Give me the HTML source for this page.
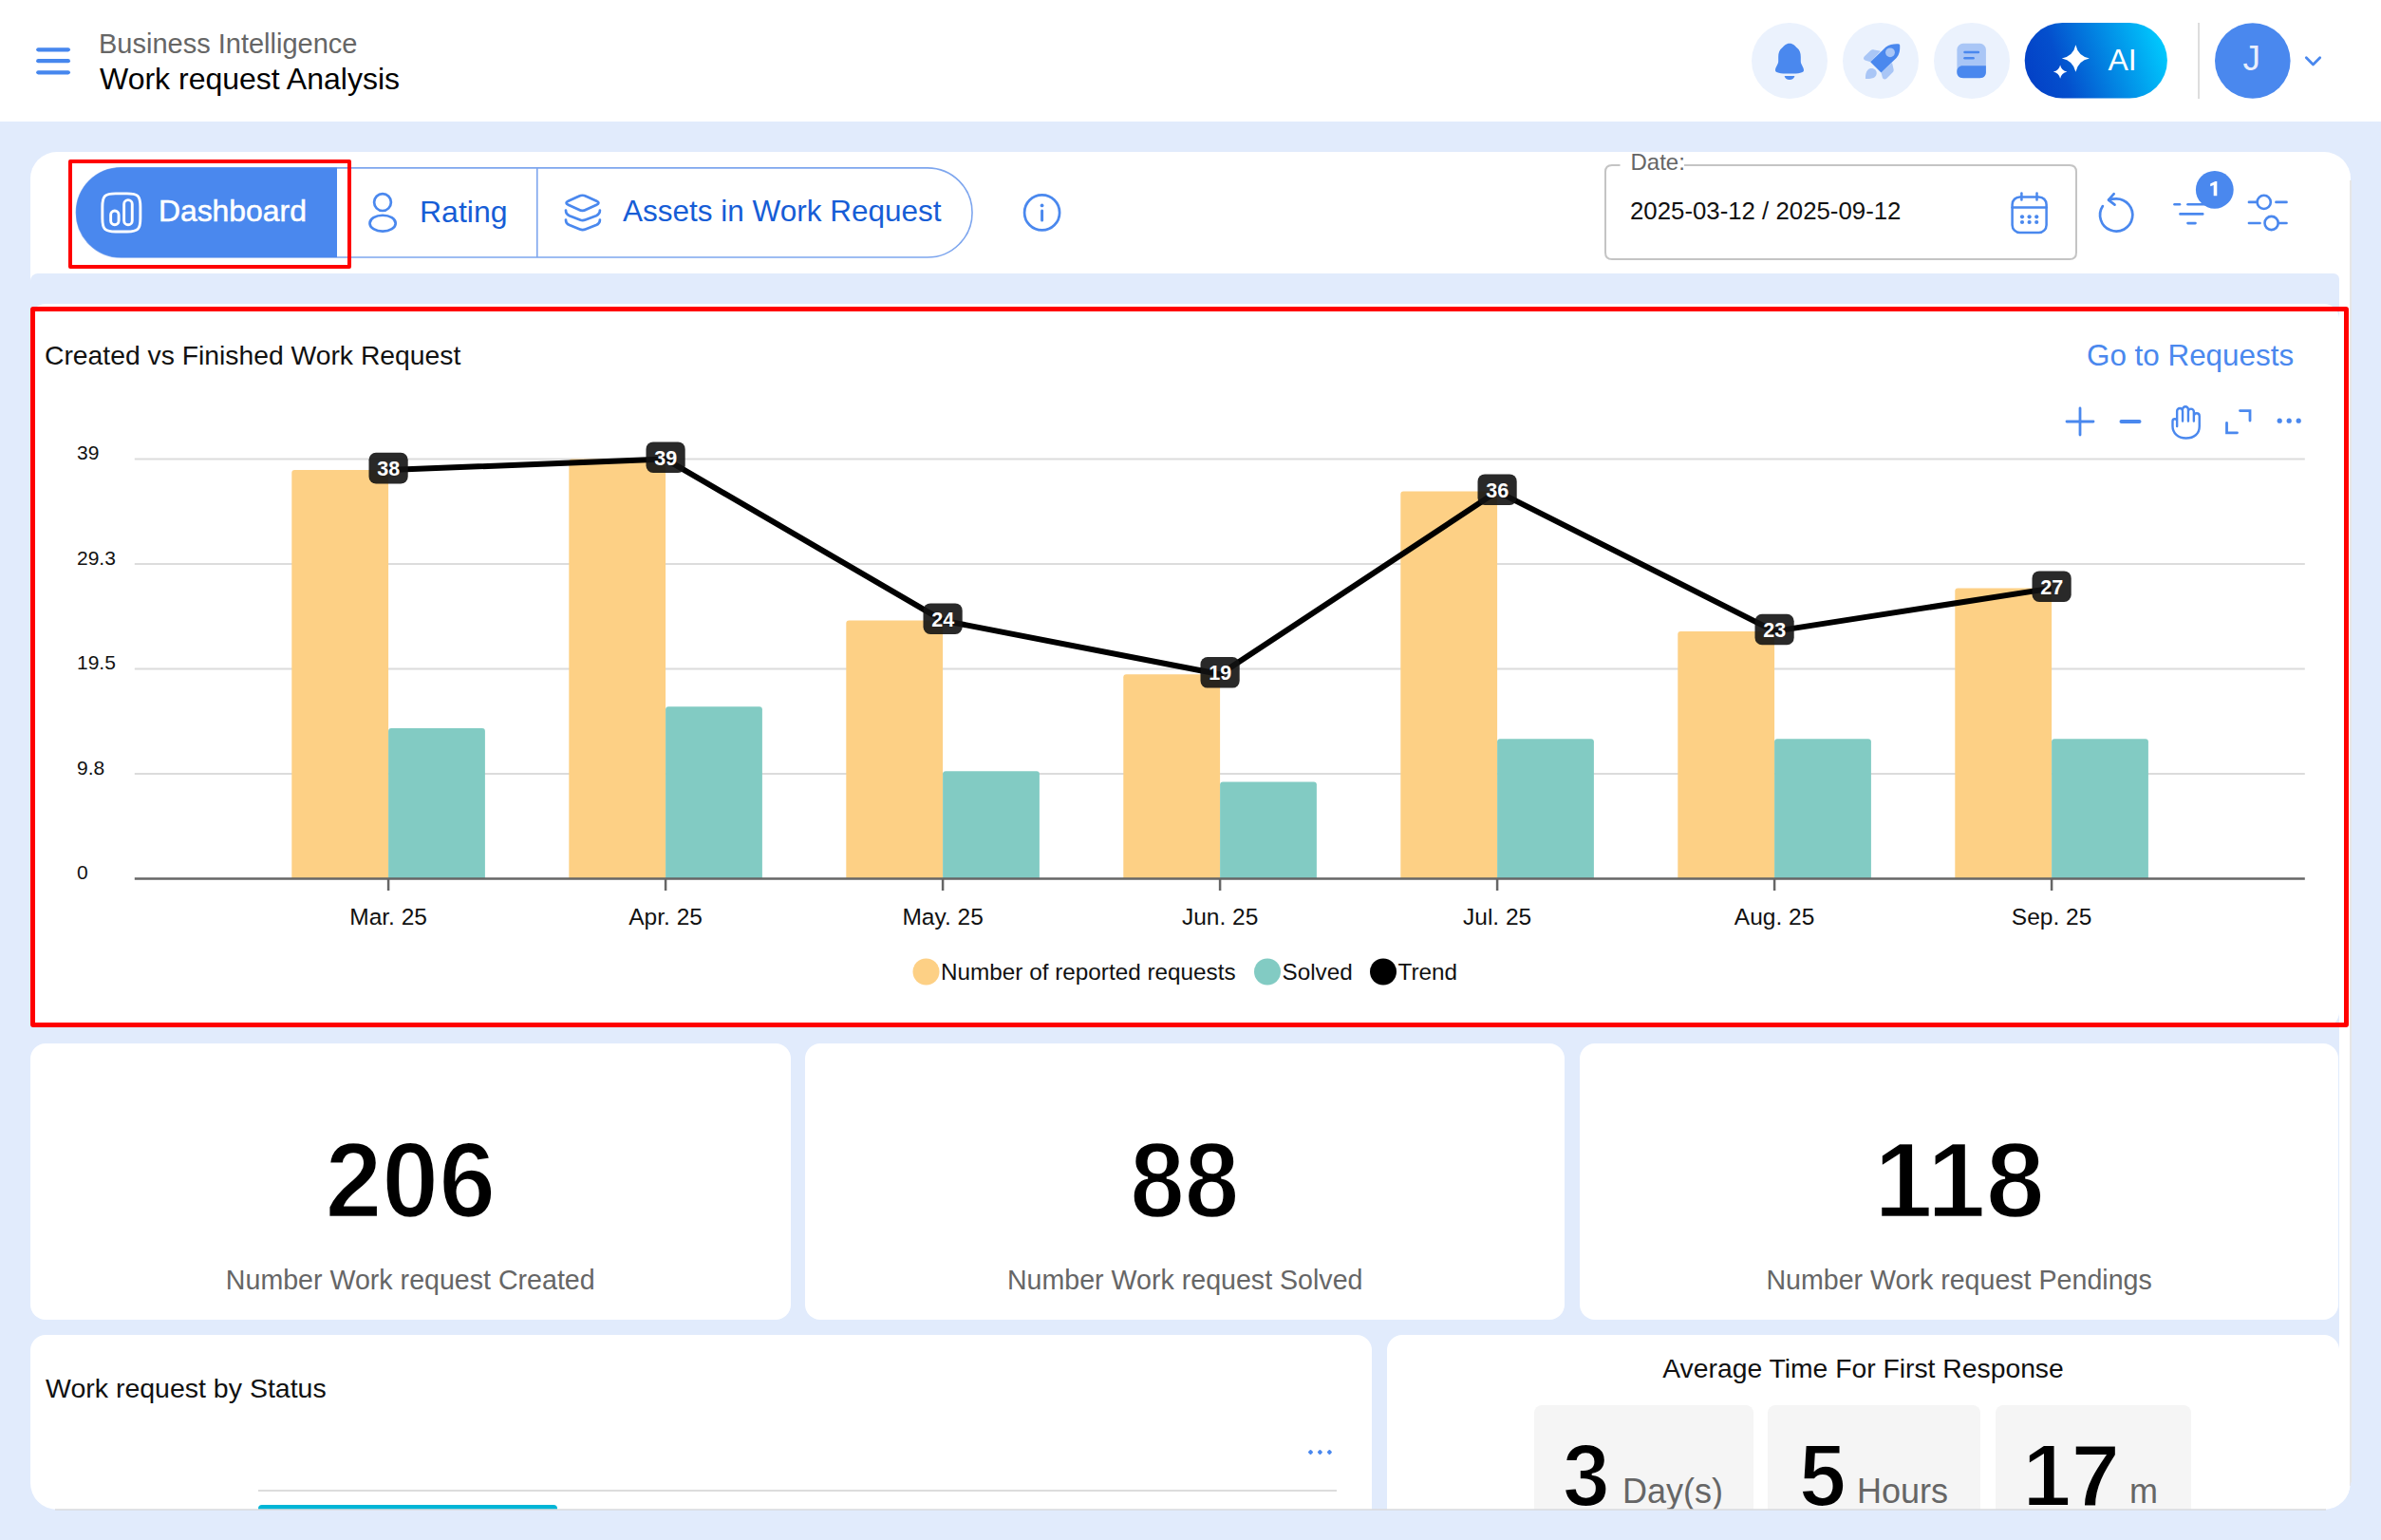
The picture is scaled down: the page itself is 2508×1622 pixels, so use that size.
<!DOCTYPE html>
<html>
<head>
<meta charset="utf-8">
<style>
html,body{margin:0;padding:0;}
body{width:2508px;height:1622px;overflow:hidden;position:relative;background:#e1ebfc;font-family:"Liberation Sans",sans-serif;color:#111;}
.a{position:absolute;}
.t{position:absolute;line-height:1;white-space:nowrap;}
#hdr{left:0;top:0;width:2508px;height:128px;background:#fff;}
#outer{left:32px;top:160px;width:2444px;height:1430px;background:#fff;border-radius:28px;}
#inner{left:32px;top:288px;width:2432px;height:1302px;background:#e1ebfc;border-radius:8px 6px 0 28px;}
.card{position:absolute;background:#fff;border-radius:16px;}
.kn{text-align:center;top:1186.9px;font-size:113px;font-weight:700;color:#000;-webkit-text-stroke:2.4px #fff;transform:scaleX(0.915);}
.tn{top:1508.4px;font-size:92px;font-weight:700;color:#000;-webkit-text-stroke:2px #f5f5f5;}
svg text{font-family:"Liberation Sans",sans-serif;}
</style>
</head>
<body>
<div id="hdr" class="a"></div>
<div id="outer" class="a"></div>
<div id="inner" class="a"></div>

<div class="a" style="left:2475.2px;top:190px;width:1.4px;height:1375px;background:#e6e6e6"></div>
<!-- cards -->
<div class="card" style="left:32px;top:320px;width:2432px;height:762px;"></div>
<div class="card" style="left:32px;top:1099px;width:800.5px;height:291px;"></div>
<div class="card" style="left:848.4px;top:1099px;width:799.6px;height:291px;"></div>
<div class="card" style="left:1663.7px;top:1099px;width:799.8px;height:291px;"></div>
<div class="card" style="left:32px;top:1406px;width:1413px;height:300px;"></div>
<div class="card" style="left:1461px;top:1406px;width:1003px;height:300px;"></div>
<!-- bottom clip -->
<div class="a" style="left:0;top:1590px;width:2508px;height:32px;background:#e1ebfc"></div>

<!-- header texts -->
<div class="t" style="left:104px;top:32.3px;font-size:29px;color:#666">Business Intelligence</div>
<div class="t" style="left:105px;top:67px;font-size:32px;color:#000">Work request Analysis</div>

<!-- date -->
<div class="t" style="left:1717.5px;top:158.6px;font-size:24px;color:#666">Date:</div>
<div class="t" style="left:1717px;top:209.7px;font-size:25.8px;color:#111">2025-03-12 / 2025-09-12</div>

<!-- chart title -->
<div class="t" style="left:47px;top:360px;font-size:28.3px;color:#111">Created vs Finished Work Request</div>
<div class="t" style="left:2198px;top:359.2px;font-size:31.4px;color:#4a88ee">Go to Requests</div>

<!-- KPI -->
<div class="t kn" style="left:32px;width:800.5px;transform:scaleX(0.953)">206</div>
<div class="t kn" style="left:848.4px;width:799.6px;">88</div>
<div class="t kn" style="left:1663.7px;width:799.8px;transform:scaleX(0.985)">118</div>
<div class="t" style="left:32px;width:800.5px;text-align:center;top:1334px;font-size:28.6px;color:#666">Number Work request Created</div>
<div class="t" style="left:848.4px;width:799.6px;text-align:center;top:1334px;font-size:28.6px;color:#666">Number Work request Solved</div>
<div class="t" style="left:1663.7px;width:799.8px;text-align:center;top:1334px;font-size:28.6px;color:#666">Number Work request Pendings</div>

<!-- bottom row -->
<div class="t" style="left:48px;top:1448px;font-size:28.5px;color:#111">Work request by Status</div>
<div class="t" style="left:1461px;width:1003px;text-align:center;top:1427px;font-size:28.3px;color:#111">Average Time For First Response</div>
<div class="a" style="left:1615.6px;top:1479.6px;width:231px;height:200px;background:#f5f5f5;border-radius:8px"></div>
<div class="a" style="left:1862.4px;top:1479.6px;width:224px;height:200px;background:#f5f5f5;border-radius:8px"></div>
<div class="a" style="left:2102.3px;top:1479.6px;width:206px;height:200px;background:#f5f5f5;border-radius:8px"></div>
<div class="t tn" style="left:1646px;transform-origin:0 0;transform:scaleX(0.97)">3</div>
<div class="t" style="left:1709px;top:1553.2px;font-size:36px;color:#666">Day(s)</div>
<div class="t tn" style="left:1894.5px;transform-origin:0 0;transform:scaleX(0.97)">5</div>
<div class="t" style="left:1956px;top:1553.2px;font-size:36px;color:#666">Hours</div>
<div class="t tn" style="left:2130.5px;transform-origin:0 0;transform:scaleX(1.0)">17</div>
<div class="t" style="left:2243px;top:1553.2px;font-size:36px;color:#666">m</div>
<div class="a" style="left:272px;top:1569px;width:1136px;height:2px;background:#dcdcdc"></div>
<div class="a" style="left:272px;top:1584.6px;width:314.6px;height:20px;background:#00b5d6;border-radius:4px 4px 0 0"></div>
<div class="a" style="left:0;top:1590px;width:2508px;height:32px;background:#e1ebfc"></div>

<!-- graphics overlay -->
<svg class="a" style="left:0;top:0" width="2508" height="1622" viewBox="0 0 2508 1622">
  <!-- outer card bottom corners -->
  <path d="M31,1561 L31,1591 L61,1591 L60,1590 A28,28 0 0 1 32,1562 Z" fill="#e1ebfc"/>
  <path d="M2477,1561 L2477,1591 L2447,1591 L2448,1590 A28,28 0 0 0 2476,1562 Z" fill="#e1ebfc"/>
  <line x1="58" y1="1590" x2="2450" y2="1590" stroke="#d9dadc" stroke-width="1.3"/>
  <!-- hamburger -->
  <g stroke="#4687ee" stroke-width="4.3" stroke-linecap="round">
    <line x1="40.3" y1="52.3" x2="71.8" y2="52.3"/>
    <line x1="40.3" y1="64.2" x2="71.8" y2="64.2"/>
    <line x1="40.3" y1="76.3" x2="71.8" y2="76.3"/>
  </g>
  <!-- header circles -->
  <circle cx="1885" cy="64" r="40" fill="#ebf2fd"/>
  <circle cx="1981" cy="64" r="40" fill="#ebf2fd"/>
  <circle cx="2077" cy="64" r="40" fill="#ebf2fd"/>
  <!-- bell -->
  <path fill="#4a88ee" d="M1885,45.8 C1881,45.8 1879.5,48.5 1877,50.5 C1874.3,52.8 1873.2,55.8 1873.2,60 L1873.2,64.5 C1873.2,68 1870,70.5 1870,74 C1870,76.6 1875,77.6 1885,77.6 C1895,77.6 1900,76.6 1900,74 C1900,70.5 1896.8,68 1896.8,64.5 L1896.8,60 C1896.8,55.8 1895.7,52.8 1893,50.5 C1890.5,48.5 1889,45.8 1885,45.8 Z"/>
  <path fill="#4a88ee" d="M1879.6,80 L1890.4,80 C1889.8,82.6 1887.8,84 1885,84 C1882.2,84 1880.2,82.6 1879.6,80 Z"/>
  <!-- rocket -->
  <g>
    <path fill="#a9c6f6" d="M1964.6,63.6 C1962.6,62.6 1962.5,60.6 1964,59.2 L1970,53.6 C1971.3,52.4 1972.5,52.1 1974.2,52.4 L1981,53.8 L1970.2,65.3 Z"/>
    <path fill="#a9c6f6" d="M1981.5,76.6 L1993,66 L1994.5,72.5 C1994.9,74.2 1994.6,75.4 1993.4,76.6 L1987.2,82.7 C1985.8,84 1984.3,83.7 1983,82.2 Z"/>
    <path fill="#a9c6f6" d="M1965,83 C1964.8,79 1965.5,75.5 1967.6,73.5 C1969.8,71.4 1973.5,71.6 1975.4,73.6 C1977.4,75.6 1977.2,79 1975,81 C1973,82.8 1969.5,83.1 1965,83 Z"/>
    <path fill="#4a88ee" d="M1970.2,65.2 L1986.5,49.5 C1990,46.5 1995,46 1999.5,46.2 C2000.8,46.3 2001.2,46.8 2001.2,48 C2001.4,52.5 2000.8,57.5 1997.6,61 L1981.5,76.6 Z"/>
    <circle cx="1991" cy="55.3" r="4.9" fill="#a9c6f6"/>
  </g>
  <!-- book -->
  <rect x="2061.4" y="45.8" width="30.5" height="36.3" rx="6.5" fill="#a9c6f6"/>
  <path fill="#4a88ee" d="M2061.3,75.8 C2061.3,71.8 2063.5,69.3 2067.6,69.3 L2091.9,69.3 L2091.9,75.6 C2091.9,80 2089.6,82.2 2085.4,82.2 L2067.9,82.2 C2063.6,82.2 2061.3,80 2061.3,75.8 Z"/>
  <g stroke="#4a88ee" stroke-width="2.5" stroke-linecap="round">
    <line x1="2069.5" y1="54.9" x2="2083.9" y2="54.9"/>
    <line x1="2069.5" y1="61.3" x2="2078.6" y2="61.3"/>
  </g>
  <!-- AI pill -->
  <defs>
    <linearGradient id="aig" gradientUnits="userSpaceOnUse" x1="2140" y1="100" x2="2283" y2="48">
      <stop offset="0" stop-color="#0340c6"/>
      <stop offset="0.25" stop-color="#044fcd"/>
      <stop offset="1" stop-color="#00ccff"/>
    </linearGradient>
  </defs>
  <rect x="2132.7" y="24" width="150.2" height="79.6" rx="39.8" fill="url(#aig)"/>
  <path fill="#fff" d="M2186.4,47.2 Q2188.9,59.1 2200.9,61.4 Q2188.9,63.7 2186.4,75.8 Q2183.9,63.7 2171.8,61.4 Q2183.9,59.1 2186.4,47.2 Z"/>
  <path fill="#fff" d="M2170.1,68.4 Q2171.4,74.3 2177.4,75.6 Q2171.4,76.9 2170.1,82.8 Q2168.8,76.9 2162.8,75.6 Q2168.8,74.3 2170.1,68.4 Z"/>
  <text x="2220.5" y="74.1" font-size="32" fill="#fff">AI</text>
  <line x1="2316" y1="24" x2="2316" y2="104" stroke="#dddddd" stroke-width="2"/>
  <circle cx="2372.8" cy="64" r="39.8" fill="#4a88ee"/>
  <text x="2362.5" y="74.4" font-size="37" fill="#e8eefc">J</text>
  <polyline points="2429.3,60.8 2436.5,68 2443.7,60.8" fill="none" stroke="#4a88ee" stroke-width="2.8" stroke-linecap="round" stroke-linejoin="round"/>

  <!-- tab group -->
  <path d="M127.5,176.9 L977,176.9 A47.05,47.05 0 0 1 977,271 L127.5,271 A47.05,47.05 0 0 1 127.5,176.9 Z" fill="none" stroke="#7ea6ee" stroke-width="1.6"/>
  <path d="M127.5,176.4 L355,176.4 L355,271 L127.5,271 A47.3,47.3 0 0 1 127.5,176.4 Z" fill="#4a88ee"/>
  <line x1="565.8" y1="176.9" x2="565.8" y2="271" stroke="#7ea6ee" stroke-width="1.6"/>
  <!-- dashboard icon -->
  <path d="M121.85,203.85 L133.85,203.85 C145.32999999999998,203.85 147.85,206.37 147.85,217.85 L147.85,229.95 C147.85,241.42999999999998 145.32999999999998,243.95 133.85,243.95 L121.85,243.95 C110.36999999999999,243.95 107.85,241.42999999999998 107.85,229.95 L107.85,217.85 C107.85,206.37 110.36999999999999,203.85 121.85,203.85 Z" fill="none" stroke="#fff" stroke-width="2.9"/>
  <rect x="116.65" y="221.95" width="8.4" height="14.8" rx="4.2" fill="none" stroke="#fff" stroke-width="2.9"/>
  <rect x="130.65" y="210.65" width="8.6" height="26.1" rx="4.3" fill="none" stroke="#fff" stroke-width="2.9"/>
  <!-- person icon -->
  <circle cx="403" cy="213.1" r="8.9" fill="none" stroke="#4a88ee" stroke-width="2.7"/>
  <ellipse cx="403.1" cy="235.15" rx="13.6" ry="8.4" fill="none" stroke="#4a88ee" stroke-width="2.7"/>
  <!-- layers icon -->
  <g fill="none" stroke="#4a88ee" stroke-width="2.7" stroke-linejoin="round" stroke-linecap="round">
    <path d="M609.6,206.8 L598.6,211.8 Q594.4,213.8 598.6,215.8 L609.6,220.8 Q613.5,222.9 617.4,220.8 L628.4,215.8 Q632.6,213.8 628.4,211.8 L617.4,206.8 Q613.5,204.7 609.6,206.8 Z"/>
    <path d="M596,221.6 C596,224.4 597,226 599.8,227.2 L610.8,231.6 Q613.7,232.8 616.6,231.6 L628,227.2 C630.8,226 631.9,224.4 631.9,221.6"/>
    <path d="M596,231.5 C596,234.3 597,235.9 599.8,237.1 L610.8,241.5 Q613.7,242.7 616.6,241.5 L628,237.1 C630.8,235.9 631.9,234.3 631.9,231.5"/>
  </g>
  <!-- info icon -->
  <circle cx="1097.6" cy="223.9" r="18.5" fill="none" stroke="#4a88ee" stroke-width="2.7"/>
  <circle cx="1097.6" cy="216.4" r="1.9" fill="#4a88ee"/>
  <line x1="1097.6" y1="222" x2="1097.6" y2="232" stroke="#4a88ee" stroke-width="3" stroke-linecap="round"/>

  <!-- date field -->
  <path d="M1706.5,174 L1698,174 Q1691,174 1691,181 L1691,266 Q1691,273 1698,273 L2180,273 Q2187,273 2187,266 L2187,181 Q2187,174 2180,174 L1774,174" fill="none" stroke="#c4c4c4" stroke-width="2"/>
  <!-- calendar -->
  <g fill="none" stroke="#4a88ee" stroke-width="2.5" stroke-linecap="round">
    <rect x="2119.6" y="207.4" width="36" height="37.5" rx="8"/>
    <line x1="2119.6" y1="218.5" x2="2155.6" y2="218.5"/>
    <line x1="2129.4" y1="203.6" x2="2129.4" y2="210.5"/>
    <line x1="2145.5" y1="203.6" x2="2145.5" y2="210.5"/>
  </g>
  <g fill="#4a88ee">
    <circle cx="2130" cy="228.3" r="2.1"/><circle cx="2137.6" cy="228.3" r="2.1"/><circle cx="2145.2" cy="228.3" r="2.1"/>
    <circle cx="2130" cy="234" r="2.1"/><circle cx="2137.6" cy="234" r="2.1"/><circle cx="2145.2" cy="234" r="2.1"/>
  </g>
  <!-- refresh -->
  <g fill="none" stroke="#4a88ee" stroke-width="2.7" stroke-linecap="round" stroke-linejoin="round">
    <path d="M2214.9,217.1 A17.1,17.1 0 1 0 2228.9,209.4 C2226,209.4 2223.5,209.8 2221.2,210.5"/>
    <path d="M2226.7,204.2 L2221,210.6 L2227.5,215.6"/>
  </g>
  <!-- filter -->
  <g stroke="#4a88ee" stroke-width="2.6" stroke-linecap="round">
    <line x1="2290.5" y1="215.3" x2="2296" y2="215.3"/>
    <line x1="2304.5" y1="215.3" x2="2325" y2="215.3"/>
    <line x1="2296.5" y1="225.4" x2="2320.2" y2="225.4"/>
    <line x1="2304.5" y1="235.1" x2="2312.5" y2="235.1"/>
  </g>
  <circle cx="2332.8" cy="199.8" r="19.9" fill="#4a88ee"/>
  <path fill="#fff" d="M2331.7,206.2 L2331.7,195 L2328.2,196.3 L2328.2,193.6 L2333.4,190.9 L2335.3,190.9 L2335.3,206.2 Z"/>
  <!-- sliders -->
  <g fill="none" stroke="#4a88ee" stroke-width="2.6" stroke-linecap="round">
    <line x1="2368.9" y1="212.9" x2="2377" y2="212.9"/>
    <line x1="2397.4" y1="212.9" x2="2408.5" y2="212.9"/>
    <circle cx="2384.7" cy="212.9" r="7.1"/>
    <line x1="2368.9" y1="235" x2="2380.5" y2="235"/>
    <line x1="2400" y1="235" x2="2408.5" y2="235"/>
    <circle cx="2392.6" cy="235" r="7.1"/>
  </g>

  <!-- chart toolbar -->
  <g fill="none" stroke="#4a88ee" stroke-width="2.8" stroke-linecap="round">
    <line x1="2177" y1="444" x2="2205" y2="444"/>
    <line x1="2191" y1="430" x2="2191" y2="458"/>
    <line x1="2234.5" y1="444" x2="2253.5" y2="444" stroke-width="4"/>
    <path d="M2345.5,445.5 L2345.5,455.8 L2356.5,455.8"/>
    <path d="M2359.5,432.6 L2370,432.6 L2370,443"/>
  </g>
  <g fill="#4a88ee">
    <circle cx="2401.2" cy="443.2" r="2.6"/><circle cx="2411.2" cy="443.2" r="2.6"/><circle cx="2421.2" cy="443.2" r="2.6"/>
  </g>
  <!-- hand -->
  <path fill="none" stroke="#4a88ee" stroke-width="2.4" stroke-linecap="round" stroke-linejoin="round" d="M2293.15,449 L2293.15,433 A2.95,2.95 0 0 1 2299.05,433 L2299.05,443.5 M2299.05,431.2 A2.95,2.95 0 0 1 2304.95,431.2 L2304.95,443.5 M2304.95,433.6 A2.95,2.95 0 0 1 2310.85,433.6 L2310.85,443.5 M2310.85,438.2 A2.95,2.95 0 0 1 2316.75,438.2 L2316.75,449 C2316.75,457 2311,461.5 2302.6,461.5 C2294,461.5 2288.5,456 2288.5,449 L2288.5,443.5 A2.33,2.33 0 0 1 2293.15,443.5"/>

  <!-- chart -->
<line x1="141.8" y1="483.6" x2="2427.8" y2="483.6" stroke="#dcdcdc" stroke-width="2"/>
<line x1="141.8" y1="594.1" x2="2427.8" y2="594.1" stroke="#dcdcdc" stroke-width="2"/>
<line x1="141.8" y1="704.6" x2="2427.8" y2="704.6" stroke="#dcdcdc" stroke-width="2"/>
<line x1="141.8" y1="815.0" x2="2427.8" y2="815.0" stroke="#dcdcdc" stroke-width="2"/>
<text x="81" y="484.4" font-size="21" fill="#111">39</text>
<text x="81" y="594.9" font-size="21" fill="#111">29.3</text>
<text x="81" y="705.4" font-size="21" fill="#111">19.5</text>
<text x="81" y="815.8" font-size="21" fill="#111">9.8</text>
<text x="81" y="926.3" font-size="21" fill="#111">0</text>
<path d="M307.3,925.5 L307.3,498.0 Q307.3,495.0 310.3,495.0 L406.1,495.0 Q409.1,495.0 409.1,498.0 L409.1,925.5 Z" fill="#fdd085"/>
<path d="M409.1,925.5 L409.1,769.9 Q409.1,766.9 412.1,766.9 L507.9,766.9 Q510.9,766.9 510.9,769.9 L510.9,925.5 Z" fill="#82cbc3"/>
<path d="M599.3,925.5 L599.3,486.6 Q599.3,483.6 602.3,483.6 L698.1,483.6 Q701.1,483.6 701.1,486.6 L701.1,925.5 Z" fill="#fdd085"/>
<path d="M701.1,925.5 L701.1,747.2 Q701.1,744.2 704.1,744.2 L799.9,744.2 Q802.9,744.2 802.9,747.2 L802.9,925.5 Z" fill="#82cbc3"/>
<path d="M891.3,925.5 L891.3,656.6 Q891.3,653.6 894.3,653.6 L990.1,653.6 Q993.1,653.6 993.1,656.6 L993.1,925.5 Z" fill="#fdd085"/>
<path d="M993.1,925.5 L993.1,815.2 Q993.1,812.2 996.1,812.2 L1091.9,812.2 Q1094.9,812.2 1094.9,815.2 L1094.9,925.5 Z" fill="#82cbc3"/>
<path d="M1183.3,925.5 L1183.3,713.2 Q1183.3,710.2 1186.3,710.2 L1282.1,710.2 Q1285.1,710.2 1285.1,713.2 L1285.1,925.5 Z" fill="#fdd085"/>
<path d="M1285.1,925.5 L1285.1,826.5 Q1285.1,823.5 1288.1,823.5 L1383.9,823.5 Q1386.9,823.5 1386.9,826.5 L1386.9,925.5 Z" fill="#82cbc3"/>
<path d="M1475.3,925.5 L1475.3,520.6 Q1475.3,517.6 1478.3,517.6 L1574.1,517.6 Q1577.1,517.6 1577.1,520.6 L1577.1,925.5 Z" fill="#fdd085"/>
<path d="M1577.1,925.5 L1577.1,781.2 Q1577.1,778.2 1580.1,778.2 L1675.9,778.2 Q1678.9,778.2 1678.9,781.2 L1678.9,925.5 Z" fill="#82cbc3"/>
<path d="M1767.3,925.5 L1767.3,667.9 Q1767.3,664.9 1770.3,664.9 L1866.1,664.9 Q1869.1,664.9 1869.1,667.9 L1869.1,925.5 Z" fill="#fdd085"/>
<path d="M1869.1,925.5 L1869.1,781.2 Q1869.1,778.2 1872.1,778.2 L1967.9,778.2 Q1970.9,778.2 1970.9,781.2 L1970.9,925.5 Z" fill="#82cbc3"/>
<path d="M2059.3,925.5 L2059.3,622.6 Q2059.3,619.6 2062.3,619.6 L2158.1,619.6 Q2161.1,619.6 2161.1,622.6 L2161.1,925.5 Z" fill="#fdd085"/>
<path d="M2161.1,925.5 L2161.1,781.2 Q2161.1,778.2 2164.1,778.2 L2259.9,778.2 Q2262.9,778.2 2262.9,781.2 L2262.9,925.5 Z" fill="#82cbc3"/>
<line x1="141.8" y1="925.5" x2="2427.8" y2="925.5" stroke="#666" stroke-width="2.5"/>
<line x1="409.1" y1="925.5" x2="409.1" y2="938" stroke="#666" stroke-width="2.5"/>
<text x="409.1" y="973.8" font-size="24.5" fill="#111" text-anchor="middle">Mar. 25</text>
<line x1="701.1" y1="925.5" x2="701.1" y2="938" stroke="#666" stroke-width="2.5"/>
<text x="701.1" y="973.8" font-size="24.5" fill="#111" text-anchor="middle">Apr. 25</text>
<line x1="993.1" y1="925.5" x2="993.1" y2="938" stroke="#666" stroke-width="2.5"/>
<text x="993.1" y="973.8" font-size="24.5" fill="#111" text-anchor="middle">May. 25</text>
<line x1="1285.1" y1="925.5" x2="1285.1" y2="938" stroke="#666" stroke-width="2.5"/>
<text x="1285.1" y="973.8" font-size="24.5" fill="#111" text-anchor="middle">Jun. 25</text>
<line x1="1577.1" y1="925.5" x2="1577.1" y2="938" stroke="#666" stroke-width="2.5"/>
<text x="1577.1" y="973.8" font-size="24.5" fill="#111" text-anchor="middle">Jul. 25</text>
<line x1="1869.1" y1="925.5" x2="1869.1" y2="938" stroke="#666" stroke-width="2.5"/>
<text x="1869.1" y="973.8" font-size="24.5" fill="#111" text-anchor="middle">Aug. 25</text>
<line x1="2161.1" y1="925.5" x2="2161.1" y2="938" stroke="#666" stroke-width="2.5"/>
<text x="2161.1" y="973.8" font-size="24.5" fill="#111" text-anchor="middle">Sep. 25</text>
<polyline points="409.1,495.0 701.1,483.6 993.1,653.6 1285.1,710.2 1577.1,517.6 1869.1,664.9 2161.1,619.6" fill="none" stroke="#000" stroke-width="6" stroke-linejoin="round"/>
<rect x="388.5" y="476.8" width="41.2" height="32.6" rx="7.5" fill="rgba(18,18,18,0.9)"/>
<text x="409.3" y="501.0" font-size="21.5" font-weight="700" fill="#fff" text-anchor="middle">38</text>
<rect x="680.5" y="465.4" width="41.2" height="32.6" rx="7.5" fill="rgba(18,18,18,0.9)"/>
<text x="701.3" y="489.6" font-size="21.5" font-weight="700" fill="#fff" text-anchor="middle">39</text>
<rect x="972.5" y="635.4" width="41.2" height="32.6" rx="7.5" fill="rgba(18,18,18,0.9)"/>
<text x="993.3" y="659.6" font-size="21.5" font-weight="700" fill="#fff" text-anchor="middle">24</text>
<rect x="1264.5" y="692.0" width="41.2" height="32.6" rx="7.5" fill="rgba(18,18,18,0.9)"/>
<text x="1285.3" y="716.2" font-size="21.5" font-weight="700" fill="#fff" text-anchor="middle">19</text>
<rect x="1556.5" y="499.4" width="41.2" height="32.6" rx="7.5" fill="rgba(18,18,18,0.9)"/>
<text x="1577.3" y="523.6" font-size="21.5" font-weight="700" fill="#fff" text-anchor="middle">36</text>
<rect x="1848.5" y="646.7" width="41.2" height="32.6" rx="7.5" fill="rgba(18,18,18,0.9)"/>
<text x="1869.3" y="670.9" font-size="21.5" font-weight="700" fill="#fff" text-anchor="middle">23</text>
<rect x="2140.5" y="601.4" width="41.2" height="32.6" rx="7.5" fill="rgba(18,18,18,0.9)"/>
<text x="2161.3" y="625.6" font-size="21.5" font-weight="700" fill="#fff" text-anchor="middle">27</text>
<circle cx="975.5" cy="1023.5" r="14" fill="#fdd085"/>
<text x="991" y="1032.3" font-size="24.3" fill="#111">Number of reported requests</text>
<circle cx="1335" cy="1023.5" r="14" fill="#82cbc3"/>
<text x="1350.5" y="1032.3" font-size="24.3" fill="#111">Solved</text>
<circle cx="1457" cy="1023.5" r="14" fill="#000"/>
<text x="1472.5" y="1032.3" font-size="24.3" fill="#111">Trend</text>

  <!-- bottom dots -->
  <g fill="#4a88ee">
    <rect x="1378.45" y="1527.45" width="4.1" height="4.1" rx="1" transform="rotate(45 1380.5 1529.5)"/><rect x="1388.3500000000001" y="1527.45" width="4.1" height="4.1" rx="1" transform="rotate(45 1390.4 1529.5)"/><rect x="1398.3500000000001" y="1527.45" width="4.1" height="4.1" rx="1" transform="rotate(45 1400.4 1529.5)"/>
  </g>
</svg>

<!-- tab labels -->
<div class="t" style="left:166.9px;top:206.8px;font-size:31.9px;color:#fff;-webkit-text-stroke:0.5px #fff">Dashboard</div>
<div class="t" style="left:442px;top:206.6px;font-size:32px;color:#165dd6">Rating</div>
<div class="t" style="left:656px;top:207px;font-size:31.5px;color:#165dd6">Assets in Work Request</div>

<!-- red annotation boxes -->
<div class="a" style="left:72px;top:168px;width:298px;height:115px;box-sizing:border-box;border:4.7px solid #ff0000;border-radius:2px"></div>
<div class="a" style="left:32px;top:323px;width:2442px;height:759px;box-sizing:border-box;border:5px solid #ff0000;border-radius:3px"></div>
</body>
</html>
